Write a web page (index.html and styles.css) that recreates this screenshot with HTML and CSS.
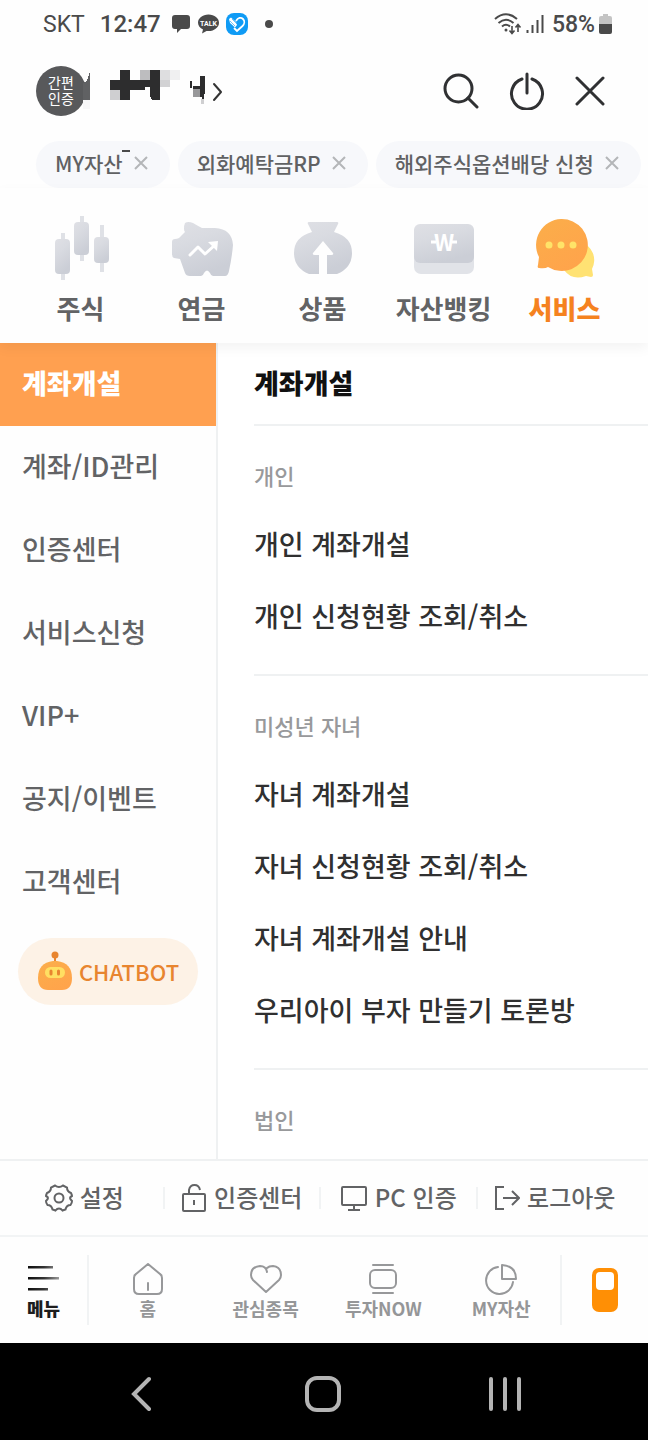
FILE: index.html
```
<!DOCTYPE html>
<html lang="ko">

<head>
    <meta charset="UTF-8">
    <meta name="viewport" content="width=device-width, initial-scale=1.0">
    <title>전체메뉴</title>
    <link rel="stylesheet" href="styles.css">
</head>

<body>
    <!-- 상태바 -->
    <div class="status">
        <span class="carrier">SKT</span>
        <span class="clock">12:47</span>
        <svg class="st-msg" width="18" height="20" viewBox="0 0 18 20"><path d="M3 1h12q3 0 3 3v8q0 3-3 3H9l-4 4v-4H3q-3 0-3-3V4q0-3 3-3z" fill="#4a4a4a"/></svg>
        <svg class="st-talk" width="21" height="20" viewBox="0 0 21 20">
            <path d="M10.500 0.500c6 0 10.500 3.700 10.500 8.200s-4.500 8.300-10.500 8.300l-2-.1L4 19.500l1-4C2 14 0 11.500 0 8.700 0 4.200 4.500.5 10.500.5z" fill="#4a4a4a"/>
            <text x="10.500" y="11.500" text-anchor="middle" class="talk">TALK</text>
        </svg>
        <svg class="st-heart" width="22" height="22" viewBox="0 0 22 22">
            <rect width="22" height="22" rx="8" fill="#0f9bf5"/>
            <path d="M10 8c2-3.500 5-4 7-2 2 2 1.500 5-.5 7L11 18l-3-3" fill="none" stroke="#fff" stroke-width="1.800"/>
            <path d="M3 6l2-1.500 5 4.500 1 3-2 2.500-5-4.500z" fill="#fff"/>
            <path d="M4 8l5 5M6 6l5 5" stroke="#0f9bf5" stroke-width=".6"/>
        </svg>
        <span class="dot"></span>
        <div class="status-right">
            <svg width="28" height="22" viewBox="0 0 28 22" fill="none" stroke="#4a4a4a" stroke-width="2">
                <path d="M1 6q11-9.500 22 0M4.500 10q7.500-6.500 15 0M8 13.500q4-3.500 8 0"/>
                <circle cx="12" cy="17" r="1.500" fill="#4a4a4a" stroke="none"/>
                <path d="M18 13v7M15.500 17.500l2.500 3 2.500-3M24 19v-7M21.500 14.500l2.500-3 2.500 3" stroke-width="1.600"/>
            </svg>
            <svg width="18" height="20" viewBox="0 0 18 20" stroke="#4a4a4a" stroke-width="2"><path d="M1.500 16v3M6.500 11v8M11.500 6v13M16.500 1v18"/></svg>
            <span class="percent">58%</span>
            <svg width="13" height="20" viewBox="0 0 13 20">
                <path d="M4 0h5v2h2q2 0 2 2v6H0V4q0-2 2-2h2z" fill="#c4c4c4"/>
                <path d="M0 10h13v8q0 2-2 2H2q-2 0-2-2z" fill="#4a4a4a"/>
            </svg>
        </div>
    </div>

    <!-- 상단 사용자 영역 -->
    <header class="top">
        <div class="user">
            <span class="badge">간편<br>인증</span>
            <button class="user-name" aria-label="내 정보">
                <svg width="142" height="46" viewBox="83 68 142 46" shape-rendering="crispEdges">
                    <path d="M83 83l4-2 3-9v28h-7z" fill="#606163"/>
                    <path d="M83 100h7v9h-7z" fill="#f7f7f8"/>
                    <path d="M120 70h10v10h20v-5h10v25h-8v-3h-2v-10h-5v3h-15v10h-10V90h-10V80h10z" fill="#2d2d2e"/>
                    <path d="M150 70h10v30h-8l-2-4z" fill="#2d2d2e"/>
                    <path d="M140 70h10v10h-10z" fill="#bdbdbf"/>
                    <path d="M110 90h10v10h-10z" fill="#cfcfd1"/>
                    <path d="M160 70h10v10h-10z" fill="#dedee0"/>
                    <path d="M160 80h10v7h-10z" fill="#d2d2d4"/>
                    <path d="M170 70h10v10h-10z" fill="#f0f0f1"/>
                    <path d="M190 81h2v7h-2zM200 76h5v18h-1v6h-2v-3h-2v-8h-7v-3h7z" fill="#2d2d2e"/>
                    <path d="M193 89h7v8h-7z" fill="#98989a"/>
                    <path d="M201 99h3v5h-3z" fill="#cfcfd1"/>
                    <path d="M214 84l7 8-7 8" fill="none" stroke="#333" stroke-width="2" stroke-linecap="round" stroke-linejoin="round" shape-rendering="auto"/>
                </svg>
            </button>
        </div>
        <div class="top-buttons">
            <button aria-label="검색"><svg width="36" height="36" viewBox="0 0 36 36"><circle cx="15.500" cy="15.500" r="13.500"/><path d="M25 25l9 9"/></svg></button>
            <button aria-label="로그아웃"><svg width="36" height="38" viewBox="0 0 36 38"><path d="M13 7a15.500 15.500 0 1 0 10 0M18 2v19"/></svg></button>
            <button aria-label="닫기"><svg width="30" height="30" viewBox="0 0 30 30"><path d="M2 2l26 26M28 2L2 28"/></svg></button>
        </div>
    </header>

    <!-- 최근 메뉴 -->
    <div class="chips">
        <div class="chip">
            <a href="#">MY자산</a>
            <button aria-label="MY자산 삭제"><svg width="14" height="14" viewBox="0 0 14 14"><path d="M1 1l12 12M13 1L1 13"/></svg></button>
            <i class="speck"></i>
        </div>
        <div class="chip">
            <a href="#">외화예탁금RP</a>
            <button aria-label="외화예탁금RP 삭제"><svg width="14" height="14" viewBox="0 0 14 14"><path d="M1 1l12 12M13 1L1 13"/></svg></button>
        </div>
        <div class="chip">
            <a href="#">해외주식옵션배당 신청</a>
            <button aria-label="해외주식옵션배당 신청 삭제"><svg width="14" height="14" viewBox="0 0 14 14"><path d="M1 1l12 12M13 1L1 13"/></svg></button>
        </div>
    </div>

    <!-- 카테고리 -->
    <nav class="category">
        <a href="#">
            <svg width="64" height="68" viewBox="0 0 64 68">
                <defs>
                    <linearGradient id="gray" x1="0" y1="0" x2=".4" y2="1">
                        <stop offset="0" stop-color="#dfe0e5"/>
                        <stop offset=".4" stop-color="#d9dbe1"/>
                        <stop offset="1" stop-color="#cbced6"/>
                    </linearGradient>
                </defs>
                <path d="M12 19h4v47h-4zM31 2h4v45h-4zM51 11h4v47h-4z" fill="#dfe1e6"/>
                <rect x="6" y="25" width="15" height="35" rx="4" fill="url(#gray)"/>
                <rect x="25" y="8" width="15" height="33" rx="4" fill="url(#gray)"/>
                <rect x="45" y="23" width="15" height="26" rx="4" fill="url(#gray)"/>
            </svg>
            <span>주식</span>
        </a>
        <a href="#">
            <svg width="64" height="68" viewBox="0 0 64 68">
                <path d="M15 9q3-2 8 0 5 3 9 5h13q17 1 18 17-1 12-4 26-1 5-4 5H43q-2 0-3-3-3-5-6 0-1 3-3 3H20q-4 0-5-3l-5-14-6-1q-2-1-2-4V28q0-3 3-3 4 0 6-3l4-4q-1-1-1-3 0-4 1-6z" fill="url(#gray)"/>
                <path d="M20 41l8-8 7 7 10-9" fill="none" stroke="#fff" stroke-width="3" stroke-linecap="round" stroke-linejoin="round"/>
                <path d="M38 28l10-1-1 10z" fill="#fff"/>
            </svg>
            <span>연금</span>
        </a>
        <a href="#">
            <svg width="64" height="68" viewBox="0 0 64 68">
                <path d="M18 8h28q2 0 1 2l-4 8q18 5 18 21 0 15-15 21H18Q3 54 3 39q0-16 18-21l-4-8q-1-2 1-2z" fill="url(#gray)"/>
                <path d="M32 27l10 12q1 2-2 2h-4v19h-8V41h-4q-3 0-2-2z" fill="#fefefe"/>
            </svg>
            <span>상품</span>
        </a>
        <a href="#">
            <svg width="64" height="68" viewBox="0 0 64 68">
                <rect x="2" y="11" width="60" height="49" rx="7" fill="#e1e3e8"/>
                <rect x="2" y="10" width="60" height="39" rx="6" fill="url(#gray)"/>
                <path d="M19 28h5M40 28h5" stroke="#fff" stroke-width="3"/>
                <text x="32" y="37" text-anchor="middle" class="won">W</text>
            </svg>
            <span>자산뱅킹</span>
        </a>
        <a href="#" class="on">
            <svg width="64" height="68" viewBox="0 0 64 68">
                <defs>
                    <linearGradient id="orange" x1="0" y1="0" x2=".6" y2="1">
                        <stop offset="0" stop-color="#fbae4a"/>
                        <stop offset="1" stop-color="#ffa44b"/>
                    </linearGradient>
                </defs>
                <path d="M48 28a19 19 0 0 1 11 27l1 6q0 2-2 2l-5-1q-14 5-22-6z" fill="#ffe273"/>
                <path d="M28 5a26 26 0 1 1-13 48q-3 2-9 1-2 0-1-3l1-8A26 26 0 0 1 28 5z" fill="url(#orange)"/>
                <path d="M16 31h.01M28 31h.01M40 31h.01" stroke="#ffe368" stroke-width="7" stroke-linecap="round"/>
            </svg>
            <span>서비스</span>
        </a>
    </nav>

    <!-- 메뉴 본문 -->
    <main class="content">
        <nav class="side">
            <a href="#" class="on">계좌개설</a>
            <a href="#">계좌/ID관리</a>
            <a href="#">인증센터</a>
            <a href="#">서비스신청</a>
            <a href="#">VIP+</a>
            <a href="#">공지/이벤트</a>
            <a href="#">고객센터</a>
            <button class="chatbot">
                <svg width="36" height="40" viewBox="0 0 36 40">
                    <path d="M18 4v8" stroke="#e8852f" stroke-width="2"/>
                    <circle cx="18" cy="4" r="3.500" fill="#e8852f"/>
                    <path d="M16 10h4q15 2 15 17 0 12-10 12H11Q1 39 1 27 1 12 16 10z" fill="url(#orange)"/>
                    <rect x="8" y="16" width="20" height="11" rx="5.500" fill="#ffdf62"/>
                    <path d="M14 20v3M21.500 20v3" stroke="#e8852f" stroke-width="3" stroke-linecap="round"/>
                </svg>
                CHATBOT
            </button>
        </nav>
        <div class="detail">
            <h1>계좌개설</h1>
            <section>
                <h2>개인</h2>
                <a href="#">개인 계좌개설</a>
                <a href="#">개인 신청현황 조회/취소</a>
            </section>
            <section>
                <h2>미성년 자녀</h2>
                <a href="#">자녀 계좌개설</a>
                <a href="#">자녀 신청현황 조회/취소</a>
                <a href="#">자녀 계좌개설 안내</a>
                <a href="#">우리아이 부자 만들기 토론방</a>
            </section>
            <section>
                <h2>법인</h2>
            </section>
        </div>
    </main>

    <!-- 바로가기 -->
    <div class="util">
        <a href="#">
            <svg width="28" height="28" viewBox="0 0 28 28">
                <path d="M10 1.500q2 1.500 4 1.500t4-1.500l4 2q0 4 4 5.500v0q1 2 1 3-2 1-2 2t2 3q0 2-1.500 4-4 0-5 4.500l-3 1q-1.500-2-3.500-2t-3.500 2l-3-1q-1-4.500-5-4.500-1.500-2-1.500-4 2-2 2-3t-2-2q0-1 1-3 4-1.500 4-5.500z"/>
                <circle cx="14" cy="14" r="4.500"/>
            </svg>
            <span>설정</span>
        </a>
        <a href="#">
            <svg width="26" height="28" viewBox="0 0 26 28"><rect x="2" y="10" width="22" height="17" rx="1"/><path d="M8 10V6q1-5 5.500-5T19 6M13 16v5"/></svg>
            <span>인증센터</span>
        </a>
        <a href="#">
            <svg width="28" height="28" viewBox="0 0 28 28"><rect x="2" y="3" width="24" height="18" rx="1"/><path d="M14 21v5M8 26h12"/></svg>
            <span>PC 인증</span>
        </a>
        <a href="#">
            <svg width="26" height="28" viewBox="0 0 26 28"><path d="M10 3H2v22h8M9 14h15M18 7l7 7-7 7"/></svg>
            <span>로그아웃</span>
        </a>
    </div>

    <!-- 하단 탭 -->
    <nav class="tabs">
        <a href="#" class="on">
            <svg width="34" height="32" viewBox="0 0 34 32">
                <defs>
                    <linearGradient id="line" gradientUnits="userSpaceOnUse" x1="2" y1="0" x2="32" y2="0">
                        <stop offset="0" stop-color="#111"/>
                        <stop offset=".5" stop-color="#333"/>
                        <stop offset="1" stop-color="#999"/>
                    </linearGradient>
                </defs>
                <path d="M1 3h25v2.500H1zM1 14h31v2.500H1zM1 25h20v2.500H1z" fill="url(#line)" stroke="none"/>
            </svg>
            메뉴
        </a>
        <a href="#">
            <svg width="32" height="32" viewBox="0 0 32 32"><path d="M16 1L4 11q-2 1-2 4v11q0 5 5 5h18q5 0 5-5V15q0-3-2-4zM16 20v7"/></svg>
            홈
        </a>
        <a href="#">
            <svg width="34" height="32" viewBox="0 0 34 32"><path d="M18 9q-1-6-7-6-9 1-9 9 0 3 2 5l13 12 13-12q2-2 2-5 0-8-8-9-4 0-6 2"/></svg>
            관심종목
        </a>
        <a href="#">
            <svg width="32" height="32" viewBox="0 0 32 32"><rect x="3" y="7" width="26" height="18" rx="5"/><path d="M6 2h20M6 30h20"/></svg>
            투자NOW
        </a>
        <a href="#">
            <svg width="32" height="32" viewBox="0 0 32 32"><path d="M13 4a13.500 13.500 0 1 0 15 15M17 2v14h14q0-13-14-14z"/></svg>
            MY자산
        </a>
        <button class="card" aria-label="빠른메뉴">
            <svg width="26" height="44" viewBox="0 0 26 44"><rect width="26" height="44" rx="7" fill="#ff8f05"/><rect x="4" y="4" width="18" height="18" rx="4" fill="#fff"/></svg>
        </button>
    </nav>

    <!-- 시스템 네비게이션 -->
    <div class="system">
        <button aria-label="뒤로"><svg width="20" height="36" viewBox="0 0 20 36"><path d="M18 3L3 18l15 15"/></svg></button>
        <button aria-label="홈"><svg width="36" height="36" viewBox="0 0 36 36"><rect x="2" y="2" width="32" height="32" rx="10"/></svg></button>
        <button aria-label="최근 앱"><svg width="32" height="36" viewBox="0 0 32 36"><path d="M2 3v30M16 3v30M30 3v30"/></svg></button>
    </div>
</body>

</html>
```
FILE: styles.css
```
* {
    box-sizing: border-box;
}

body {
    display: flex;
    flex-direction: column;
    height: 100vh;
    margin: 0;
    background: #fefefe;
    color: #333;
    font-family: "Noto Sans CJK KR", sans-serif;
}

a {
    color: inherit;
    text-decoration: none;
}

button {
    padding: 0;
    border: 0;
    background: none;
    color: inherit;
    font: inherit;
    cursor: pointer;
}

svg {
    display: block;
    flex: none;
}

/* 상태바 */
.status {
    display: flex;
    align-items: center;
    flex: none;
    height: 48px;
    padding: 0 36px 0 43px;
    color: #4a4a4a;
    font-family: Roboto, sans-serif;
}

.carrier {
    font-size: 23px;
}

.clock {
    margin: 0 11px 0 15px;
    font-size: 24px;
    font-weight: 500;
}

.st-talk {
    margin: 0 7px 0 8px;
}

.talk {
    fill: #fff;
    font-size: 7px;
    font-weight: 700;
}

.dot {
    width: 8px;
    height: 8px;
    margin-left: 17px;
    border-radius: 50%;
    background: #4a4a4a;
}

.status-right {
    display: flex;
    align-items: center;
    gap: 4px;
    margin-left: auto;
}

.percent {
    margin-left: 4px;
    font-size: 23px;
    font-weight: 500;
}

/* 상단 사용자 영역 */
.top {
    display: flex;
    justify-content: space-between;
    align-items: center;
    flex: none;
    height: 86px;
    padding: 0 43px 0 36px;
}

.user {
    display: flex;
    align-items: center;
}

.badge {
    width: 50px;
    margin-right: -3px;
    padding: 9px 0;
    border-radius: 50%;
    background: #58595b;
    color: #fff;
    font-family: "Liberation Sans", "Noto Sans CJK KR", sans-serif;
    font-size: 14px;
    line-height: 16px;
    text-align: center;
}

.top-buttons {
    display: flex;
    align-items: center;
    gap: 30px;
}

.top-buttons svg {
    fill: none;
    stroke: #303133;
    stroke-width: 3;
    stroke-linecap: round;
}

/* 최근 메뉴 */
.chips {
    display: flex;
    flex: none;
    gap: 8px;
    padding: 7px 0 0 36px;
    overflow: hidden;
}

.chip {
    position: relative;
    display: flex;
    align-items: center;
    flex: none;
    gap: 11px;
    height: 47px;
    padding: 0 22px 3px 19px;
    border-radius: 24px;
    background: #f7f8fb;
    color: #606163;
    font-size: 21px;
    font-weight: 500;
}

.chip svg {
    fill: none;
    stroke: #b4b6b8;
    stroke-width: 2;
}

.speck {
    position: absolute;
    top: 9px;
    left: 86px;
    width: 8px;
    height: 2px;
    background: #4a4a4a;
}

/* 카테고리 */
.category {
    position: relative;
    z-index: 1;
    display: grid;
    grid-template-columns: repeat(5, 1fr);
    flex: none;
    height: 155px;
    padding: 26px 23px 0 20px;
    box-shadow: 0 5px 12px rgba(0, 0, 0, .05);
}

.category a {
    display: flex;
    flex-direction: column;
    align-items: center;
    color: #626365;
    font-size: 26px;
    font-weight: 700;
    line-height: 52px;
    white-space: nowrap;
}

.category .on {
    color: #f5821f;
    font-weight: 900;
}

.won {
    fill: #fff;
    font-size: 22px;
    font-weight: 700;
}

/* 메뉴 본문 */
.content {
    display: flex;
    flex: 1;
    min-height: 0;
    overflow-y: auto;
    scrollbar-width: none;
}

.side {
    display: flex;
    flex-direction: column;
    flex: none;
    width: 218px;
    border-right: 2px solid #eff1f2;
}

.side a {
    padding: 0 0 4px 22px;
    color: #626365;
    font-size: 27px;
    font-weight: 500;
    line-height: 79px;
}

.side .on {
    background: #ffa050;
    color: #fff;
    font-weight: 900;
}

.chatbot {
    display: flex;
    justify-content: center;
    align-items: center;
    gap: 6px;
    height: 67px;
    margin: 14px 18px;
    padding-bottom: 2px;
    border-radius: 34px;
    background: #fdf2e6;
    color: #e8852f;
    font-size: 22px;
    font-weight: 500;
}

.detail {
    flex: 1;
    padding-left: 36px;
    background: #fff;
}

.detail h1 {
    margin: 0;
    padding-bottom: 2px;
    color: #111;
    font-size: 27px;
    font-weight: 900;
    line-height: 79px;
}

.detail section {
    padding: 33px 0 22px;
    border-top: 2px solid #eff1f2;
}

.detail h2 {
    margin: 0 0 17px;
    color: #98999b;
    font-size: 22px;
    font-weight: 500;
    line-height: 32px;
}

.detail a {
    display: block;
    color: #303030;
    font-size: 27px;
    font-weight: 500;
    line-height: 72px;
}

/* 바로가기 */
.util {
    display: grid;
    grid-template-columns: repeat(4, 1fr);
    align-items: center;
    flex: none;
    height: 76px;
    padding: 0 16px 0 6px;
    border-top: 2px solid #eff1f2;
}

.util a {
    display: flex;
    justify-content: center;
    align-items: center;
    gap: 7px;
    height: 22px;
    color: #626365;
    font-size: 24px;
    font-weight: 500;
    white-space: nowrap;
}

.util span {
    padding-bottom: 4px;
}

.util a + a {
    border-left: 2px solid #f1f3f4;
}

.util svg {
    fill: none;
    stroke: #626365;
    stroke-width: 2;
}

/* 하단 탭 */
.tabs {
    display: grid;
    grid-template-columns: 89px repeat(4, 1fr) 88px;
    flex: none;
    height: 108px;
    padding: 18px 0;
    border-top: 2px solid #f2f4f5;
}

.tabs a {
    display: flex;
    flex-direction: column;
    align-items: center;
    padding-top: 8px;
    color: #959698;
    font-size: 18px;
    font-weight: 700;
    line-height: 26px;
}

.tabs a svg {
    fill: none;
    stroke: #97989a;
    stroke-width: 2;
    stroke-linecap: round;
    stroke-linejoin: round;
}

.tabs .on {
    border-right: 2px solid #f1f3f4;
    color: #1d1d1d;
    font-weight: 900;
}

.card {
    display: flex;
    justify-content: center;
    align-items: center;
    border-left: 2px solid #f1f3f4;
}

/* 시스템 네비게이션 */
.system {
    display: grid;
    grid-template-columns: repeat(3, 1fr);
    flex: none;
    height: 97px;
    padding: 4px 52px 0 50px;
    background: #000;
}

.system button {
    display: flex;
    justify-content: center;
    align-items: center;
}

.system svg {
    fill: none;
    stroke: #b4b4b4;
    stroke-width: 4;
    stroke-linecap: round;
}
```
